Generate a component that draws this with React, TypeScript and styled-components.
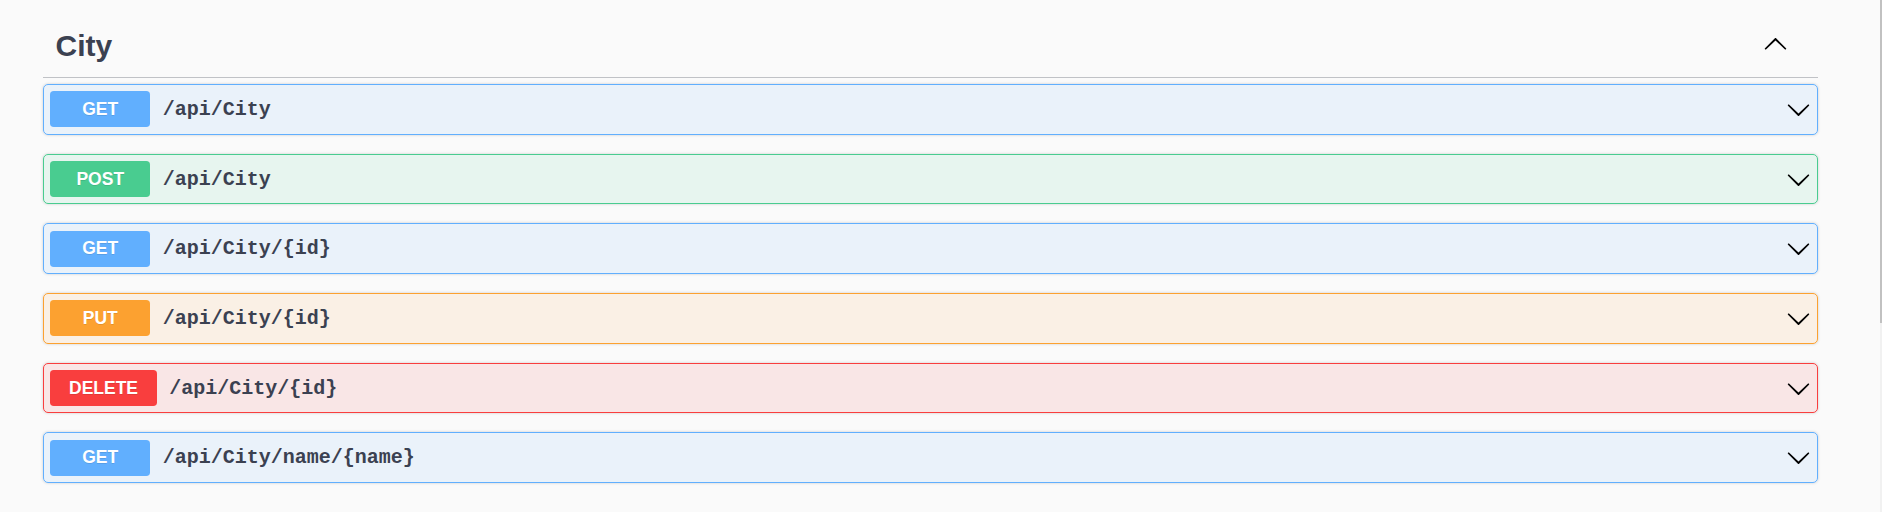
import React from "react";
import styled, { createGlobalStyle } from "styled-components";

const GlobalStyle = createGlobalStyle`
  html, body {
    margin: 0;
    padding: 0;
    background: #fafafa;
    font-family: "Liberation Sans", Arial, sans-serif;
    color: #3b4151;
  }
  * { box-sizing: border-box; }
`;

const Page = styled.div`
  padding: 16.6px 64px 0 43px;
`;

const Section = styled.section`
  display: flex;
  flex-direction: column;
`;

const TagHeader = styled.div`
  display: flex;
  align-items: center;
  justify-content: space-between;
  padding: 12.5px 30px 13.6px 12.5px;
  border-bottom: 1px solid rgba(59, 65, 81, 0.3);
  margin-bottom: 6.5px;
`;

const TagTitle = styled.h3`
  margin: 0;
  font-family: "Liberation Sans", Arial, sans-serif;
  font-size: 30px;
  font-weight: 700;
  line-height: normal;
  color: #3b4151;
`;

const ArrowIcon = styled.svg<{ $nudge?: number }>`
  display: block;
  width: 25px;
  height: 25px;
  flex: none;
  fill: #000;
  margin-bottom: ${(p) => p.$nudge ?? 0}px;
`;

type Method = "GET" | "POST" | "PUT" | "DELETE";

const COLORS: Record<Method, string> = {
  GET: "#61affe",
  POST: "#49cc90",
  PUT: "#fca130",
  DELETE: "#f93e3e",
};

const BG: Record<Method, string> = {
  GET: "rgba(97, 175, 254, 0.1)",
  POST: "rgba(73, 204, 144, 0.1)",
  PUT: "rgba(252, 161, 48, 0.1)",
  DELETE: "rgba(249, 62, 62, 0.1)",
};

const OpBlock = styled.div<{ $method: Method }>`
  display: flex;
  align-items: center;
  padding: 6.25px;
  margin-bottom: 19.15px;
  border: 1px solid ${(p) => COLORS[p.$method]};
  border-radius: 5px;
  background: ${(p) => BG[p.$method]};
  box-shadow: 0 0 3px rgba(0, 0, 0, 0.19);
`;

const MethodBadge = styled.span<{ $method: Method }>`
  display: flex;
  align-items: center;
  justify-content: center;
  min-width: 100px;
  height: 36px;
  padding: 0 18.75px;
  border-radius: 3.75px;
  background: ${(p) => COLORS[p.$method]};
  color: #fff;
  font-family: "Liberation Sans", Arial, sans-serif;
  font-size: 17.5px;
  font-weight: 700;
  text-shadow: 0 1px 0 rgba(0, 0, 0, 0.1);
`;

const OpPath = styled.span`
  flex: 1;
  padding: 0 12.5px;
  font-family: "Liberation Mono", "Courier New", monospace;
  font-size: 20px;
  font-weight: 700;
  color: #3b4151;
`;

const ScrollTrack = styled.div`
  position: fixed;
  top: 0;
  right: 0;
  width: 2px;
  height: 100vh;
  background: #f1f1f1;
`;

const ScrollThumb = styled.div`
  width: 2px;
  height: 323px;
  background: #c1c1c1;
`;

const ChevronDown = () => (
  <ArrowIcon viewBox="0 0 20 20" aria-hidden="true">
    <path d="M17.418 6.109c.272-.268.709-.268.979 0s.271.701 0 .969l-7.908 7.83c-.27.268-.707.268-.979 0l-7.908-7.83c-.27-.268-.27-.701 0-.969.271-.268.709-.268.979 0L10 13.25l7.418-7.141z" />
  </ArrowIcon>
);

const ChevronUp = () => (
  <ArrowIcon viewBox="0 0 20 20" aria-hidden="true" $nudge={2.4}>
    <path d="M2.582 13.891c-.272.268-.709.268-.979 0s-.271-.701 0-.969l7.908-7.83c.27-.268.707-.268.979 0l7.908 7.83c.27.268.27.701 0 .969-.271.268-.709.268-.979 0L10 6.75l-7.418 7.141z" />
  </ArrowIcon>
);

const operations: { method: Method; path: string }[] = [
  { method: "GET", path: "/api/City" },
  { method: "POST", path: "/api/City" },
  { method: "GET", path: "/api/City/{id}" },
  { method: "PUT", path: "/api/City/{id}" },
  { method: "DELETE", path: "/api/City/{id}" },
  { method: "GET", path: "/api/City/name/{name}" },
];

export default function App() {
  return (
    <>
      <GlobalStyle />
      <Page>
        <Section>
          <TagHeader>
            <TagTitle>City</TagTitle>
            <ChevronUp />
          </TagHeader>
          {operations.map((op, i) => (
            <OpBlock key={i} $method={op.method}>
              <MethodBadge $method={op.method}>{op.method}</MethodBadge>
              <OpPath>{op.path}</OpPath>
              <ChevronDown />
            </OpBlock>
          ))}
        </Section>
      </Page>
      <ScrollTrack>
        <ScrollThumb />
      </ScrollTrack>
    </>
  );
}
